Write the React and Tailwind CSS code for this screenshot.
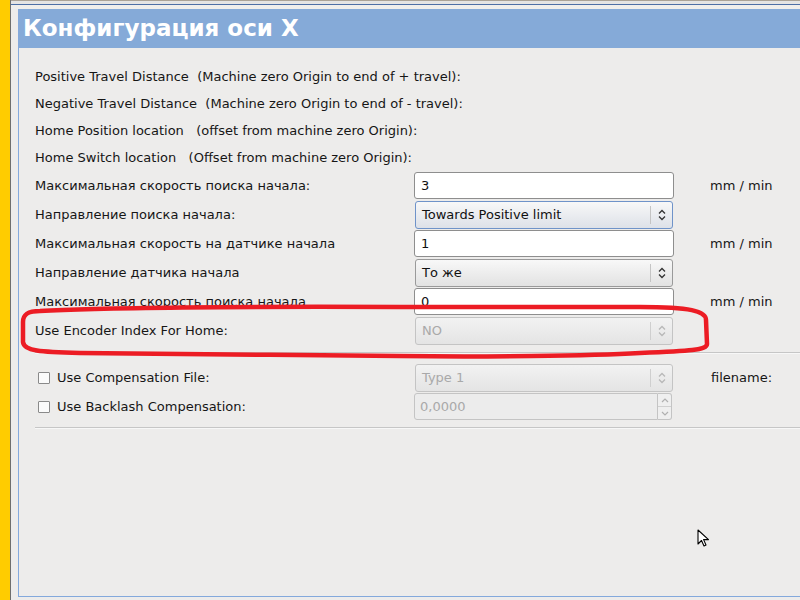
import React from 'react';

const Chevrons = ({ disabled }) => (
  <svg width="10" height="14" viewBox="0 0 10 14" fill="none" stroke={disabled ? '#b8b8b8' : '#333'} strokeWidth="1.3">
    <path d="M2 5.5 L5 2.5 L8 5.5" />
    <path d="M2 8.5 L5 11.5 L8 8.5" />
  </svg>
);

const TextField = ({ value }) => (
  <div className="h-[27px] w-[260px] bg-white border border-[#8e8e8e] rounded-[3px] flex items-center pl-[6px] text-[13px] text-[#111]">
    {value}
  </div>
);

const Combo = ({ value, focused, disabled }) => (
  <div
    className={`h-[28px] w-[258px] ml-[1px] rounded-[3px] border flex items-center ${
      disabled
        ? 'border-[#c4c4c4] bg-gradient-to-b from-[#f2f2f2] to-[#e4e4e4] text-[#a9a9a9]'
        : focused
        ? 'border-[#6f93c9] bg-gradient-to-b from-[#f8f8f8] to-[#dde1e8] text-[#111]'
        : 'border-[#9a9a9a] bg-gradient-to-b from-[#f8f8f8] to-[#e2e2e2] text-[#111]'
    }`}
  >
    <span className="flex-1 pl-[6px] text-[13px]">{value}</span>
    <div className={`w-[1px] h-[18px] ${disabled ? 'bg-[#cfcfcf]' : 'bg-[#c4c4c4]'}`} />
    <div className="w-[21px] flex justify-center">
      <Chevrons disabled={disabled} />
    </div>
  </div>
);

const SpinBox = ({ value }) => (
  <div className="h-[27px] w-[258px] flex">
    <div className="flex-1 h-full rounded-l-[3px] border border-[#c4c4c4] bg-[#ececec] flex items-center pl-[5px] text-[13px] text-[#a9a9a9]">
      {value}
    </div>
    <div className="w-[14px] h-full flex flex-col border border-l-0 border-[#c4c4c4] rounded-r-[3px] bg-[#efefef]">
      <div className="flex-1 flex items-center justify-center border-b border-[#d0d0d0]">
        <svg width="8" height="5" viewBox="0 0 8 5" fill="none" stroke="#b0b0b0" strokeWidth="1.2"><path d="M1 4 L4 1 L7 4" /></svg>
      </div>
      <div className="flex-1 flex items-center justify-center">
        <svg width="8" height="5" viewBox="0 0 8 5" fill="none" stroke="#b0b0b0" strokeWidth="1.2"><path d="M1 1 L4 4 L7 1" /></svg>
      </div>
    </div>
  </div>
);

const CheckLabel = ({ text }) => (
  <div className="flex items-center gap-[7px] pl-[3px]">
    <div className="w-[12px] h-[12px] border border-[#8a8a8a] bg-[#fbfbfb] rounded-[1px]" />
    <span>{text}</span>
  </div>
);

export default function App() {
  const infoRows = [
    'Positive Travel Distance  (Machine zero Origin to end of + travel):',
    'Negative Travel Distance  (Machine zero Origin to end of - travel):',
    'Home Position location   (offset from machine zero Origin):',
    'Home Switch location   (Offset from machine zero Origin):',
  ];

  return (
    <div className="relative w-[800px] h-[600px] flex bg-[#edeceb] overflow-hidden font-['DejaVu_Sans',sans-serif] text-[13px] text-[#161616]">
      <div className="w-[10px] bg-[#ffcc00]" />
      <div className="w-[1px] bg-[#6e6e6e]" />
      <div className="flex-1 flex flex-col">
        <div className="h-[1px] bg-[#aaa296]" />
        <div className="h-[3px] bg-[#e4e4e4]" />
        <div className="h-[1px] bg-[#4d6fa6]" />
        <div className="h-[4px] bg-[#efeeec]" />
        <div className="pl-[7px] h-[588px]">
          <div className="h-full border-l border-b border-[#84a9dc] flex flex-col">
            <div className="h-[39px] bg-[#85aad8] flex items-center pl-[4px] text-white font-bold text-[23px]">
              Конфигурация оси X
            </div>
            <div className="pl-[16px] pt-[15px]">
              {infoRows.map((t) => (
                <div key={t} className="h-[27px] flex items-center whitespace-pre">{t}</div>
              ))}
              <div className="grid grid-cols-[379px_260px_auto]">
                <div className="h-[29px] flex items-center">Максимальная скорость поиска начала:</div>
                <div className="h-[29px] flex items-center"><TextField value="3" /></div>
                <div className="h-[29px] flex items-center pl-[36px]">mm / min</div>

                <div className="h-[29px] flex items-center">Направление поиска начала:</div>
                <div className="h-[29px] flex items-center"><Combo value="Towards Positive limit" focused /></div>
                <div />

                <div className="h-[29px] flex items-center">Максимальная скорость на датчике начала</div>
                <div className="h-[29px] flex items-center"><TextField value="1" /></div>
                <div className="h-[29px] flex items-center pl-[36px]">mm / min</div>

                <div className="h-[29px] flex items-center">Направление датчика начала</div>
                <div className="h-[29px] flex items-center"><Combo value="То же" /></div>
                <div />

                <div className="h-[29px] flex items-center">Максимальная скорость поиска начала</div>
                <div className="h-[29px] flex items-center"><TextField value="0" /></div>
                <div className="h-[29px] flex items-center pl-[36px]">mm / min</div>

                <div className="h-[29px] flex items-center">Use Encoder Index For Home:</div>
                <div className="h-[29px] flex items-center"><Combo value="NO" disabled /></div>
                <div />
              </div>
              <div className="mt-[7px] h-[1px] bg-[#c6c6c6]" />
              <div className="h-[1px] bg-[#f7f7f7]" />
              <div className="grid grid-cols-[379px_260px_auto] mt-[9px]">
                <div className="h-[29px] flex items-center"><CheckLabel text="Use Compensation File:" /></div>
                <div className="h-[29px] flex items-center"><Combo value="Type 1" disabled /></div>
                <div className="h-[29px] flex items-center pl-[37px]">filename:</div>

                <div className="h-[29px] flex items-center"><CheckLabel text="Use Backlash Compensation:" /></div>
                <div className="h-[29px] flex items-center"><SpinBox value="0,0000" /></div>
                <div />
              </div>
              <div className="mt-[6px] h-[1px] bg-[#c6c6c6]" />
              <div className="h-[1px] bg-[#f7f7f7]" />
            </div>
          </div>
        </div>
      </div>

      {/* hand-drawn red ellipse */}
      <svg className="absolute left-0 top-0 pointer-events-none" width="800" height="600" viewBox="0 0 800 600" fill="none">
        <path
          d="M40 311 C90 308 250 306 400 307 L640 307 C690 307 706 311 706 320 L707 344 C707 350 690 351 640 353 C590 356 480 357 400 356 C300 355 150 354 80 353 C40 352 24 351 23 342 L23 322 C23 313 30 311 40 311 Z"
          stroke="#ec1c24"
          strokeWidth="4.5"
          strokeLinejoin="round"
        />
      </svg>

      {/* mouse pointer */}
      <svg className="absolute left-[697px] top-[529px] pointer-events-none" width="14" height="20" viewBox="0 0 14 20">
        <path d="M1 1 L1 15 L4.5 11.5 L7 17 L9 16 L6.6 10.6 L11.5 10.6 Z" fill="#fff" stroke="#000" strokeWidth="1.1" strokeLinejoin="round" />
      </svg>
    </div>
  );
}
